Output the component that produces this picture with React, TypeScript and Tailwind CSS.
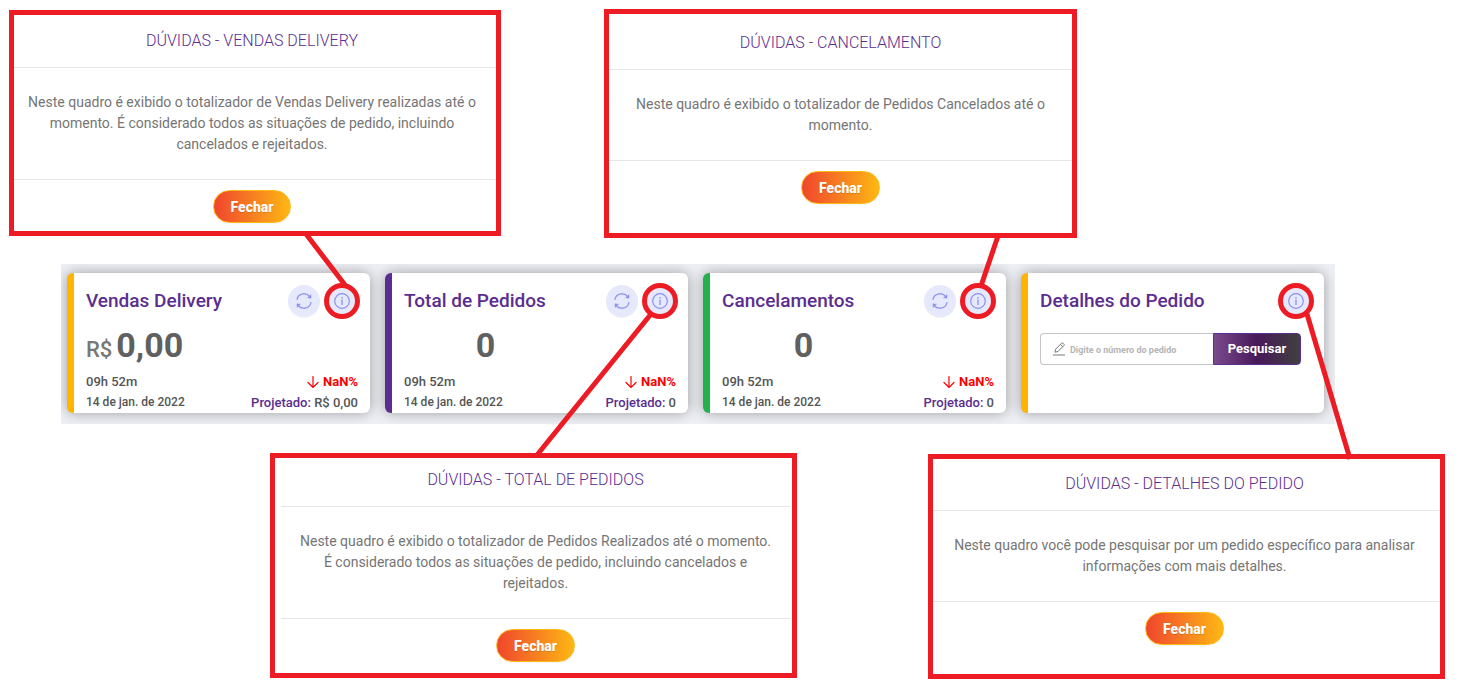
import React from 'react';
import clsx from 'clsx';

interface HelpBoxProps {
  title: string;
  text: string;
  className?: string;
  headerClass: string;
  bodyClass?: string;
  footerClass: string;
}

const HelpBox: React.FC<HelpBoxProps> = ({ title, text, className, headerClass, bodyClass = 'px-3', footerClass }) => (
  <section className={clsx('border-5 border-[#ed1c24] bg-white text-center', className)}>
    <h2 className={clsx('pb-3.5 text-base leading-6 font-light text-[#5b2d90] border-b border-[#e6e6e6]', headerClass)}>
      {title}
    </h2>
    <p className={clsx('py-6 text-sm leading-[21px] text-[#757575]', bodyClass)}>{text}</p>
    <div className={clsx('pt-2.5 border-t border-[#e6e6e6]', footerClass)}>
      <button
        type="button"
        className="h-[33px] px-[17px] rounded-full border border-[#fdb913] bg-linear-to-r/srgb from-[#f0442e] to-[#fdb913] bg-origin-border text-sm leading-none font-extrabold text-white text-shadow-2xs shadow-xs"
      >
        Fechar
      </button>
    </div>
  </section>
);

const RefreshIcon = () => (
  <svg className="w-4 h-4" viewBox="0 0 16 16" fill="none" stroke="currentColor" strokeWidth="1.2" strokeLinecap="round">
    <path d="M1 6.4A7.2 7.2 0 0 1 14.2 4.4M15 9.6A7.2 7.2 0 0 1 1.8 11.6" />
    <path d="M15 1.8v3.4l-3.3-.4zM1 14.2v-3.4l3.3.4z" fill="currentColor" strokeWidth=".4" />
  </svg>
);

const InfoIcon = () => (
  <svg className="w-4 h-4" viewBox="0 0 16 16" fill="none" stroke="currentColor">
    <circle cx="8" cy="8" r="7.3" strokeWidth="1.2" />
    <path d="M8 6.6v5.4M8 4v1.4" strokeWidth="1.3" />
  </svg>
);

const ArrowIcon = () => (
  <svg className="w-3 h-3" viewBox="0 0 12 12" fill="none" stroke="currentColor" strokeWidth="1.2" strokeLinecap="round">
    <path d="M6 .5v11M1 6.5l5 5 5-5" />
  </svg>
);

const PencilIcon = () => (
  <svg className="w-3.5 h-3.5" viewBox="0 0 14 14" fill="none" stroke="currentColor" strokeLinejoin="round">
    <path d="M3 10.2l.6-3L9.6 1.2a1 1 0 0 1 1.4 0l.9.9a1 1 0 0 1 0 1.4L6 9.5zM8.4 2.4l2.3 2.3M1 13h12" />
  </svg>
);

const InfoButton = () => (
  <button
    type="button"
    aria-label="Informações"
    className="relative flex w-8 h-8 items-center justify-center rounded-full bg-[#e6e8fc] text-[#8c8ff0]"
  >
    <InfoIcon />
    <span className="absolute -inset-0.5 rounded-full border-5 border-[#ed1c24]"></span>
  </button>
);

interface CardProps {
  title: string;
  accent: string;
  refresh?: boolean;
  children: React.ReactNode;
}

const Card: React.FC<CardProps> = ({ title, accent, refresh = true, children }) => (
  <article
    className={clsx(
      'min-h-[140px] rounded-md border-l-7 bg-white pt-3 px-3 shadow-[0_0_14px_rgba(0,0,0,0.35)]',
      accent,
    )}
  >
    <header className="flex items-center gap-1.5">
      <h3 className="mr-auto text-[19px] leading-8 font-medium text-[#5b2d90] whitespace-nowrap">{title}</h3>
      {refresh && (
        <button
          type="button"
          aria-label="Atualizar"
          className="flex w-8 h-8 items-center justify-center rounded-full bg-[#e6e8fc] text-[#8c8ff0] shadow-2xs"
        >
          <RefreshIcon />
        </button>
      )}
      <InfoButton />
    </header>
    {children}
  </article>
);

interface TotalProps {
  prefix?: string;
  value: string;
  projected: string;
}

const Total: React.FC<TotalProps> = ({ prefix, value, projected }) => (
  <>
    <p className={clsx('mt-2 text-[34px] leading-10 font-bold text-[#606060]', !prefix && 'w-[163px] text-center')}>
      {prefix && <span className="mr-1 text-[22px] leading-none font-medium text-[#777]">{prefix}</span>}
      {value}
    </p>
    <div className="mt-1.5 flex justify-between text-[13px] leading-[21px] font-medium text-[#555]">
      <div>
        <p>09h 52m</p>
        <p className="text-xs leading-[21px]">14 de jan. de 2022</p>
      </div>
      <div className="text-right">
        <p className="flex items-center justify-end gap-1 font-bold text-[#ff0000]">
          <ArrowIcon />
          NaN%
        </p>
        <p>
          <span className="text-[#5b2d90]">Projetado:</span> {projected}
        </p>
      </div>
    </div>
  </>
);

const App: React.FC = () => (
  <main className="relative bg-white pt-[9px] pb-3 font-[Roboto,sans-serif]">
    <div className="grid grid-cols-[9fr_492fr_103fr_473fr_382fr] items-start">
      <HelpBox
        className="col-start-2 mt-px"
        title="DÚVIDAS - VENDAS DELIVERY"
        text="Neste quadro é exibido o totalizador de Vendas Delivery realizadas até o momento. É considerado todos as situações de pedido, incluindo cancelados e rejeitados."
        headerClass="pt-3.5 pr-1.5"
        bodyClass="pl-3 pr-[18px]"
        footerClass="pb-2 pr-1.5"
      />
      <HelpBox
        className="col-start-4"
        title="DÚVIDAS - CANCELAMENTO"
        text="Neste quadro é exibido o totalizador de Pedidos Cancelados até o momento."
        headerClass="pt-[17px]"
        footerClass="pb-[29px]"
      />
    </div>

    <div className="mt-[26px] grid grid-cols-[61fr_1274fr_124fr]">
      <div className="col-start-2 grid grid-cols-4 gap-[15px] bg-[#eef0f5] pt-[9px] pb-[11px] pl-1.5 pr-[11px] overflow-hidden">
        <Card title="Vendas Delivery" accent="border-[#ffb400]">
          <Total prefix="R$" value="0,00" projected="R$ 0,00" />
        </Card>
        <Card title="Total de Pedidos" accent="border-[#5b2d90]">
          <Total value="0" projected="0" />
        </Card>
        <Card title="Cancelamentos" accent="border-[#22b14c]">
          <Total value="0" projected="0" />
        </Card>
        <Card title="Detalhes do Pedido" accent="border-[#ffb400]" refresh={false}>
          <form className="mt-4 mr-[11px] flex h-8">
            <label className="flex min-w-0 flex-1 items-center gap-1 rounded-l border border-r-0 border-[#c4c4c4] pl-[11px] text-[#777]">
              <PencilIcon />
              <input
                type="text"
                aria-label="Número do pedido"
                placeholder="Digite o número do pedido"
                className="min-w-0 flex-1 pt-1 text-[9px] font-bold outline-none placeholder:text-[#b5b5b5]"
              />
            </label>
            <button
              type="button"
              className="w-[88px] rounded-r border border-[#5b2d90] bg-linear-to-r/srgb from-[#7a4a8c] via-[#48195a] to-[#404040] text-[13px] font-bold text-white"
            >
              Pesquisar
            </button>
          </form>
        </Card>
      </div>
    </div>

    <div className="mt-[29px] grid grid-cols-[270fr_527fr_131fr_517fr_14fr] items-start">
      <HelpBox
        className="col-start-2 pl-1.5 pr-0.5"
        title="DÚVIDAS - TOTAL DE PEDIDOS"
        text="Neste quadro é exibido o totalizador de Pedidos Realizados até o momento. É considerado todos as situações de pedido, incluindo cancelados e rejeitados."
        headerClass="pt-2.5"
        bodyClass="px-4"
        footerClass="pb-[11px]"
      />
      <HelpBox
        className="col-start-4 mt-px"
        title="DÚVIDAS - DETALHES DO PEDIDO"
        text="Neste quadro você pode pesquisar por um pedido específico para analisar informações com mais detalhes."
        headerClass="pt-[13px] pr-1"
        bodyClass="pl-3 pr-4"
        footerClass="pb-[29px] pr-1"
      />
    </div>

    {/* connectors between each info button and its help box */}
    <svg
      className="pointer-events-none absolute inset-0 w-full h-full"
      viewBox="0 0 1459 691"
      preserveAspectRatio="none"
      stroke="#ed1c24"
      strokeWidth="5"
      fill="none"
    >
      <path d="M306 234L345 285M651 314L537 455M998 236L981 286M1307 314L1350 459" />
    </svg>
  </main>
);

export default App;
